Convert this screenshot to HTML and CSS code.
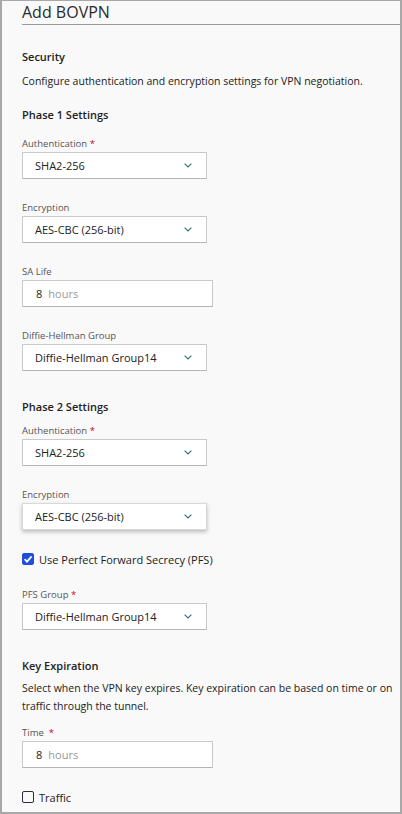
FILE: index.html
```html
<!DOCTYPE html>
<html lang="en">
<head>
<meta charset="utf-8">
<title>Add BOVPN</title>
<link rel="stylesheet" href="styles.css">
</head>
<body>
<div class="page">
  <header class="header"><h1 class="title">Add BOVPN</h1></header>
  <main class="content">
    <h2 class="section first">Security</h2>
    <p class="desc">Configure authentication and encryption settings for VPN negotiation.</p>

    <h3 class="sub sub-p1">Phase 1 Settings</h3>
    <div class="field f-first">
      <label class="label">Authentication <span class="req">*</span></label>
      <div class="select"><span>SHA2-256</span><svg class="chev" viewBox="0 0 8 5" width="8" height="5"><path d="M0.6 0.6 L4 4 L7.4 0.6" fill="none" stroke="#2f6f78" stroke-width="1.1"/></svg></div>
    </div>
    <div class="field">
      <label class="label">Encryption</label>
      <div class="select"><span>AES-CBC (256-bit)</span><svg class="chev" viewBox="0 0 8 5" width="8" height="5"><path d="M0.6 0.6 L4 4 L7.4 0.6" fill="none" stroke="#2f6f78" stroke-width="1.1"/></svg></div>
    </div>
    <div class="field">
      <label class="label">SA Life</label>
      <div class="input"><span class="num">8</span><span class="unit">hours</span></div>
    </div>
    <div class="field">
      <label class="label">Diffie-Hellman Group</label>
      <div class="select"><span>Diffie-Hellman Group14</span><svg class="chev" viewBox="0 0 8 5" width="8" height="5"><path d="M0.6 0.6 L4 4 L7.4 0.6" fill="none" stroke="#2f6f78" stroke-width="1.1"/></svg></div>
    </div>

    <h3 class="sub sub-p2">Phase 2 Settings</h3>
    <div class="field f-after-p2">
      <label class="label">Authentication <span class="req">*</span></label>
      <div class="select"><span>SHA2-256</span><svg class="chev" viewBox="0 0 8 5" width="8" height="5"><path d="M0.6 0.6 L4 4 L7.4 0.6" fill="none" stroke="#2f6f78" stroke-width="1.1"/></svg></div>
    </div>
    <div class="field">
      <label class="label">Encryption</label>
      <div class="select raised"><span>AES-CBC (256-bit)</span><svg class="chev" viewBox="0 0 8 5" width="8" height="5"><path d="M0.6 0.6 L4 4 L7.4 0.6" fill="none" stroke="#2f6f78" stroke-width="1.1"/></svg></div>
    </div>
    <div class="check-row">
      <span class="box checked"><svg viewBox="0 0 12 12" width="12" height="12"><path d="M2.6 6.2 L5 8.6 L9.6 3.4" fill="none" stroke="#fff" stroke-width="1.8"/></svg></span>
      <span class="check-text">Use Perfect Forward Secrecy (PFS)</span>
    </div>
    <div class="field">
      <label class="label">PFS Group <span class="req">*</span></label>
      <div class="select"><span>Diffie-Hellman Group14</span><svg class="chev" viewBox="0 0 8 5" width="8" height="5"><path d="M0.6 0.6 L4 4 L7.4 0.6" fill="none" stroke="#2f6f78" stroke-width="1.1"/></svg></div>
    </div>

    <h2 class="section key">Key Expiration</h2>
    <p class="desc desc-key">Select when the VPN key expires. Key expiration can be based on time or on traffic through the tunnel.</p>
    <div class="field f-time">
      <label class="label">Time &nbsp;<span class="req">*</span></label>
      <div class="input"><span class="num">8</span><span class="unit">hours</span></div>
    </div>
    <div class="check-row">
      <span class="box"></span>
      <span class="check-text">Traffic</span>
    </div>
  </main>
</div>
</body>
</html>
```

FILE: styles.css
```css
html, body {
  margin: 0;
  padding: 0;
  background: #f9f9f9;
}
.page {
  box-sizing: border-box;
  width: 402px;
  height: 814px;
  border: 1px solid #a8a8a8;
  border-width: 1px 2px 2px 2px;
  background: #f9f9f9;
  font-family: "Open Sans", "Noto Sans", sans-serif;
  color: #222;
  overflow: hidden;
}
.header {
  margin-left: 20px;
  height: 23px;
  border-bottom: 1px solid #9a9a9a;
}
.title {
  margin: 0;
  font-size: 16px;
  font-weight: 400;
  line-height: 22px;
  color: #2a2a2a;
}
.content {
  padding-left: 20px;
}
.section, .sub {
  margin: 0;
  font-size: 11px;
  font-weight: 600;
  line-height: 16px;
  color: #222;
}
.section.first { margin-top: 24px; }
.desc {
  margin: 8px 0 0;
  font-size: 10.5px;
  line-height: 16px;
  color: #222;
}
.sub-p1 { margin-top: 18px; }
.sub-p2 { margin-top: 28px; }
.section.key { margin-top: 28px; }
.desc-key {
  margin-top: 5px;
  line-height: 18px;
}
.field { margin-top: 22px; }
.field.f-first { margin-top: 14px; }
.field.f-after-p2 { margin-top: 9px; }
.field.f-time { margin-top: 11px; }
.label {
  display: block;
  font-size: 9.5px;
  line-height: 14px;
  color: #555;
  margin-bottom: 1px;
}
.req { color: #d0021b; }
.select, .input {
  box-sizing: border-box;
  height: 27px;
  background: #fff;
  border: 1px solid #c9c9c9;
  border-bottom-color: #b5b5b5;
  display: flex;
  align-items: center;
  font-size: 11px;
  color: #222;
}
.select {
  width: 185px;
  padding: 0 14px 0 12px;
  justify-content: space-between;
}
.select.raised {
  border-color: #d8d8d8;
  box-shadow: 0 2px 4px rgba(0,0,0,0.25);
}
.input {
  width: 191px;
  padding-left: 13px;
  gap: 6px;
}
.unit { color: #999; }
.check-row {
  display: flex;
  align-items: center;
  gap: 5px;
  margin-top: 21px;
  height: 16px;
}
.box {
  box-sizing: border-box;
  width: 12px;
  height: 12px;
  border: 1.3px solid #2b2b3a;
  border-radius: 2px;
  display: flex;
}
.box.checked {
  background: #1f4fd8;
  border-color: #1f4fd8;
}
.box.checked svg { margin: -1.3px; }
.check-text {
  font-size: 11px;
  color: #222;
}
.check-row + .field { margin-top: 21px; }
.field + .check-row { margin-top: 21px; }
```
